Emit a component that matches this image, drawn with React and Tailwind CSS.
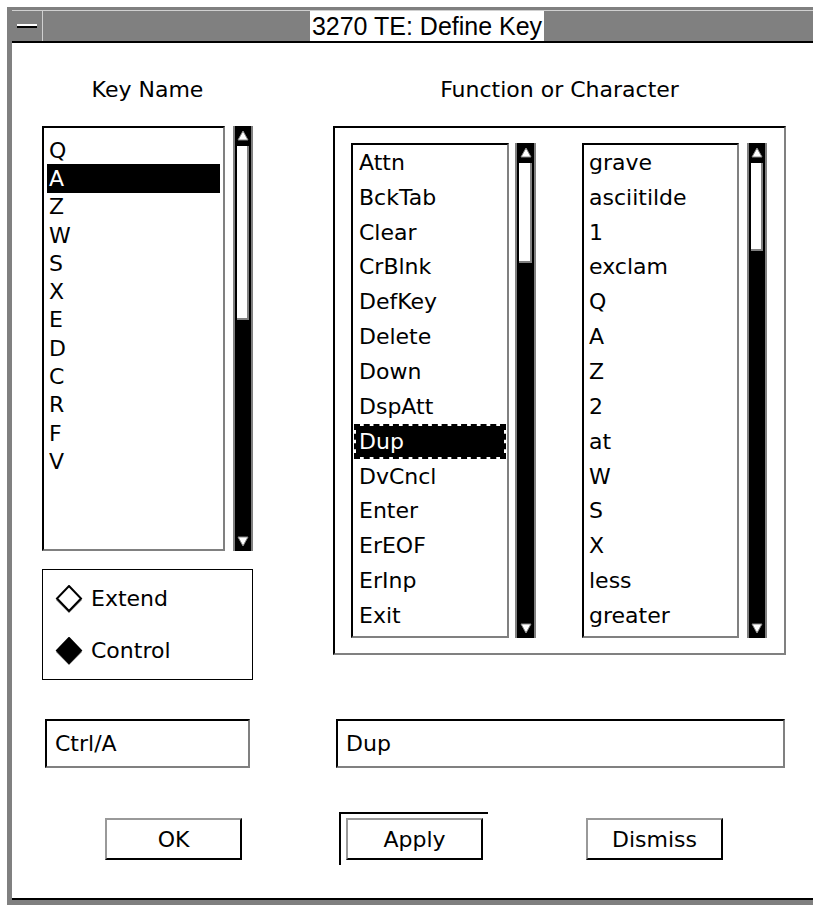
import React from 'react';

const keyNames = ['Q', 'A', 'Z', 'W', 'S', 'X', 'E', 'D', 'C', 'R', 'F', 'V'];
const functions = ['Attn', 'BckTab', 'Clear', 'CrBlnk', 'DefKey', 'Delete', 'Down', 'DspAtt', 'Dup', 'DvCncl', 'Enter', 'ErEOF', 'ErInp', 'Exit'];
const chars = ['grave', 'asciitilde', '1', 'exclam', 'Q', 'A', 'Z', '2', 'at', 'W', 'S', 'X', 'less', 'greater'];

function Arrow({ down }) {
  return (
    <svg width="12" height="12" viewBox="0 0 12 12">
      {down ? (
        <polygon points="1,2 11,2 6,11" fill="#fff" stroke="#888" strokeWidth="1" />
      ) : (
        <polygon points="6,1 11,10 1,10" fill="#fff" stroke="#888" strokeWidth="1" />
      )}
    </svg>
  );
}

function ScrollBar({ width, thumb }) {
  return (
    <div className={`${width} h-full flex flex-col bg-black border-l-2 border-r-2 border-[#808080]`}>
      <div className="h-[20px] flex items-center justify-center shrink-0">
        <Arrow />
      </div>
      <div className={`${thumb} mx-[2px] bg-white border-r-2 border-b-2 border-[#808080] shrink-0`} />
      <div className="flex-1" />
      <div className="h-[20px] flex items-center justify-center shrink-0">
        <Arrow down />
      </div>
    </div>
  );
}

function Diamond({ filled }) {
  return (
    <svg width="28" height="28" viewBox="0 0 28 28">
      <polygon points="14,2 27,15 14,28 1,15" fill="#808080" />
      <polygon points="14,1 26,13.5 14,26 2,13.5" fill={filled ? '#000' : '#fff'} stroke="#000" strokeWidth="2" />
    </svg>
  );
}

function Button({ children }) {
  return (
    <div className="w-[137px] h-[42px] flex items-center justify-center border-t-2 border-l-2 border-[#999] border-r-2 border-b-2 border-r-black border-b-black text-[22px]">
      {children}
    </div>
  );
}

export default function App() {
  return (
    <div className="w-[813px] h-[905px] bg-white overflow-hidden pl-[7px] pt-[7px] font-['DejaVu_Sans',sans-serif] text-black">
      <div className="h-full flex flex-col bg-[#808080] pl-[5px] pt-[3px] pb-[5px]">
        {/* Title bar */}
        <div className="h-[33px] shrink-0 flex border-t border-[#d0d0d0] border-b-2 border-b-black">
          <div className="w-[31px] flex items-center justify-center border-r border-[#d0d0d0]">
            <div className="w-[20px] h-[4px] bg-white border-b-2 border-black" />
          </div>
          <div className="ml-[267px] w-[234px] bg-white flex items-center justify-center font-['Liberation_Sans',sans-serif] text-[25px] leading-none">
            3270 TE: Define Key
          </div>
        </div>

        {/* Body */}
        <div className="flex-1 bg-white border-b-2 border-black flex flex-col">
          <div className="flex pl-[30px]">
            {/* Key Name column */}
            <div className="w-[211px] flex flex-col">
              <div className="h-[83px] pt-[34px] text-center text-[22px] leading-[26px]">Key Name</div>
              <div className="h-[425px] flex gap-[8px]">
                <div className="w-[183px] h-full border-t-2 border-l-2 border-black border-r-2 border-b-2 border-r-[#808080] border-b-[#808080] pt-[8px] overflow-hidden text-[22px]">
                  {keyNames.map((k) => (
                    <div
                      key={k}
                      className={`h-[28.3px] flex items-center ${k === 'A' ? 'mx-[3px] bg-black text-white pl-[2px]' : 'pl-[5px]'}`}
                    >
                      {k}
                    </div>
                  ))}
                </div>
                <ScrollBar width="w-[20px]" thumb="h-[174px]" />
              </div>
              <div className="mt-[18px] h-[111px] border border-black flex flex-col justify-center gap-[24px] pl-[12px] text-[22px]">
                <div className="flex items-center gap-[8px] h-[28px]">
                  <Diamond />
                  <span>Extend</span>
                </div>
                <div className="flex items-center gap-[8px] h-[28px]">
                  <Diamond filled />
                  <span>Control</span>
                </div>
              </div>
              <div className="mt-[39px] ml-[3px] w-[205px] h-[49px] border-t-2 border-l-2 border-black border-r-2 border-b-2 border-r-[#808080] border-b-[#808080] flex items-center pl-[8px] text-[22px]">
                Ctrl/A
              </div>
            </div>

            {/* Function column */}
            <div className="ml-[80px] w-[453px] flex flex-col">
              <div className="h-[83px] pt-[34px] text-center text-[22px] leading-[26px]">Function or Character</div>
              <div className="h-[529px] border-t-2 border-l-2 border-black border-r-2 border-b-2 border-r-[#808080] border-b-[#808080] pl-[16px] pt-[15px]">
                <div className="h-[495px] flex">
                  <div className="w-[158px] h-full border-t-2 border-l-2 border-black border-r-2 border-b-2 border-r-[#808080] border-b-[#808080] overflow-hidden text-[22px]">
                    {functions.map((f) => (
                      f === 'Dup' ? (
                        <div key={f} className="h-[34.85px] ml-[1px] mr-[1px] border-2 border-dashed border-black bg-black bg-clip-padding text-white flex items-center pl-[3px]">
                          {f}
                        </div>
                      ) : (
                        <div key={f} className="h-[34.85px] flex items-center pl-[6px]">{f}</div>
                      )
                    ))}
                  </div>
                  <div className="ml-[6px] h-full">
                    <ScrollBar width="w-[21px]" thumb="h-[100px]" />
                  </div>
                  <div className="ml-[46px] w-[157px] h-full border-t-2 border-l-2 border-black border-r-2 border-b-2 border-r-[#808080] border-b-[#808080] overflow-hidden text-[22px]">
                    {chars.map((c, i) => (
                      <div key={i} className="h-[34.85px] flex items-center pl-[5px]">{c}</div>
                    ))}
                  </div>
                  <div className="ml-[8px] h-full">
                    <ScrollBar width="w-[20px]" thumb="h-[88px]" />
                  </div>
                </div>
              </div>
              <div className="mt-[64px] ml-[3px] w-[449px] h-[49px] border-t-2 border-l-2 border-black border-r-2 border-b-2 border-r-[#808080] border-b-[#808080] flex items-center pl-[8px] text-[22px]">
                Dup
              </div>
            </div>
          </div>

          {/* Buttons */}
          <div className="mt-[44px] flex items-start pl-[93px]">
            <div className="mt-[6px]">
              <Button>OK</Button>
            </div>
            <div className="ml-[97px] w-[149px] h-[53px] border-t-2 border-l-2 border-black pl-[5px] pt-[4px]">
              <Button>Apply</Button>
            </div>
            <div className="ml-[98px] mt-[6px]">
              <Button>Dismiss</Button>
            </div>
          </div>
        </div>
      </div>
    </div>
  );
}
